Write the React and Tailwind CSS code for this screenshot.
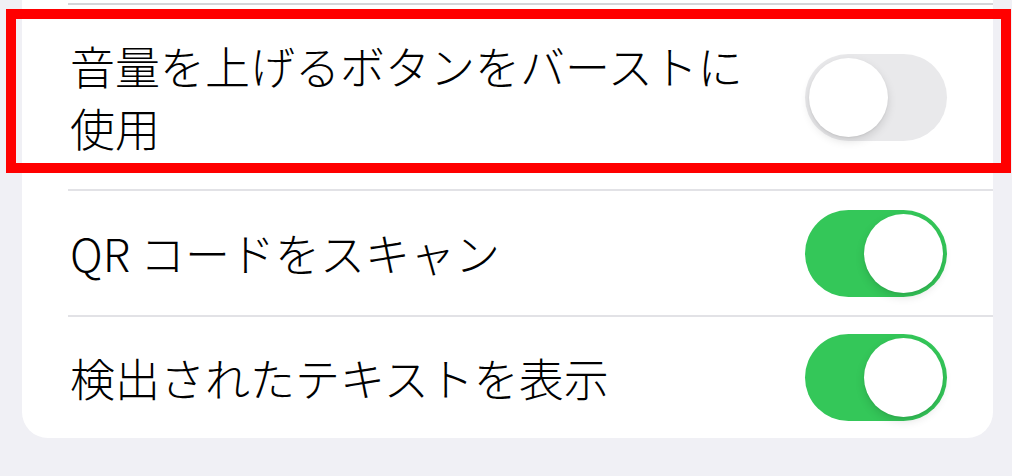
import React from 'react';

function Toggle({ on }) {
  return (
    <div
      className={`relative w-[142px] h-[87px] rounded-full shrink-0 ${on ? 'bg-[#34c759]' : 'bg-[#e9e9eb]'}`}
    >
      <div
        className={`absolute top-[4px] w-[79px] h-[79px] rounded-full bg-white shadow-[0_4px_10px_rgba(0,0,0,0.13),0_1px_2px_rgba(0,0,0,0.06)] ${on ? 'right-[4px]' : 'left-[4px]'}`}
      />
    </div>
  );
}

function Row({ height, children, on }) {
  return (
    <div className={`flex items-center justify-between pl-[48px] pr-[46px] ${height}`}>
      <div className="max-w-[700px] text-[45px] leading-[62px] font-light text-black">{children}</div>
      <Toggle on={on} />
    </div>
  );
}

export default function App() {
  return (
    <div
      className="relative w-[1012px] h-[476px] overflow-hidden bg-[#f0f0f5]"
      style={{ fontFamily: '"Noto Sans CJK JP", "Noto Sans", sans-serif' }}
    >
      {/* Settings card */}
      <div className="ml-[22px] w-[971px] bg-white rounded-b-[26px]">
        <div className="h-[3px]" />
        <div className="ml-[46px] h-[2px] bg-[#d4d4d8]" />
        <Row height="h-[184px]" on={false}>
          音量を上げるボタンをバーストに使用
        </Row>
        <div className="ml-[46px] h-[2px] bg-[#e2e2e6]" />
        <Row height="h-[124px]" on={true}>
          QR コードをスキャン
        </Row>
        <div className="ml-[46px] h-[2px] bg-[#e2e2e6]" />
        <Row height="h-[121px]" on={true}>
          検出されたテキストを表示
        </Row>
      </div>

      {/* Highlight box */}
      <div className="absolute left-[6px] top-[9px] w-[1005px] h-[164px] border-[10px] border-[#ff0000]" />
    </div>
  );
}
